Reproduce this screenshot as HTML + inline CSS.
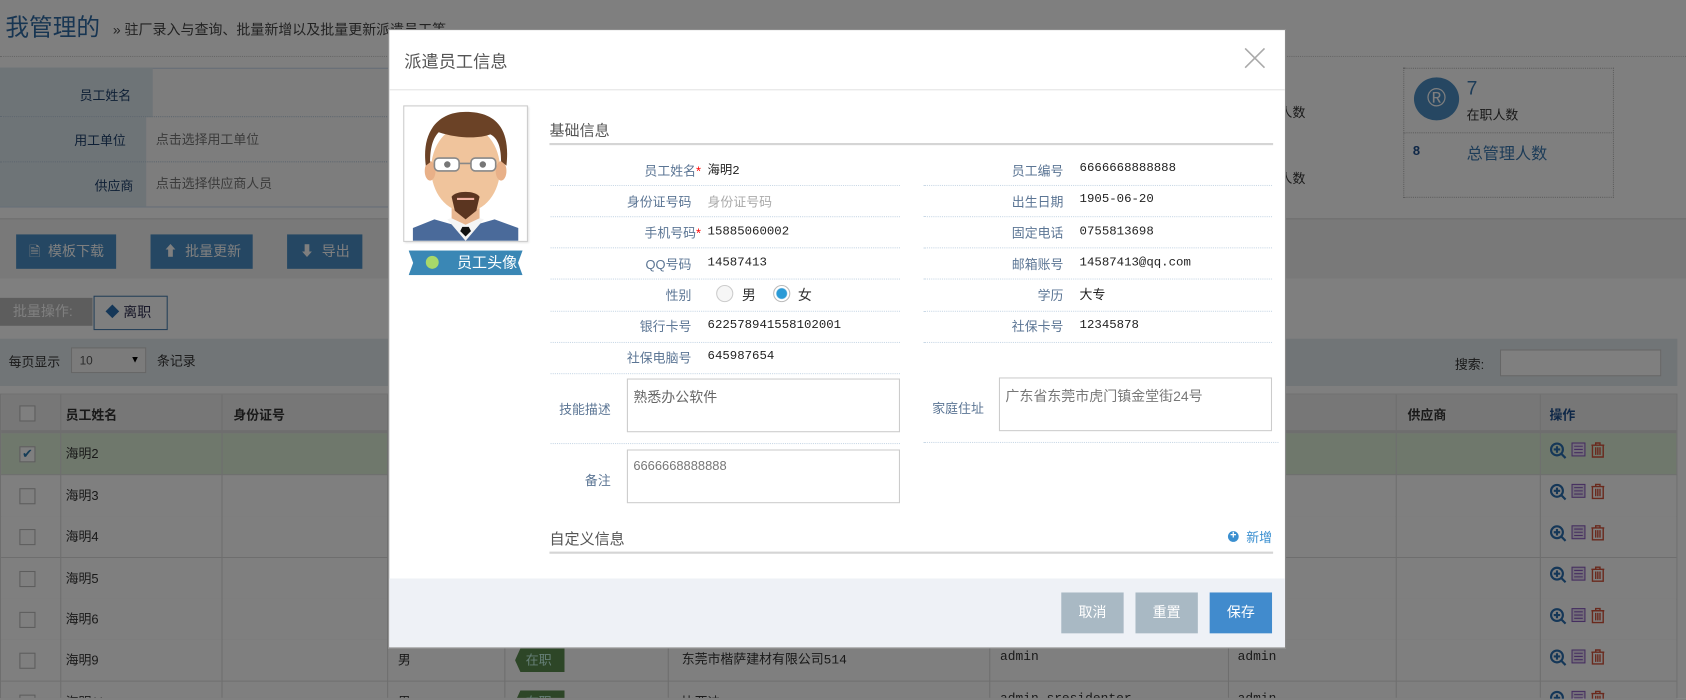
<!DOCTYPE html>
<html><head><meta charset="utf-8"><style>
*{margin:0;padding:0;box-sizing:border-box}
html,body{width:1686px;height:700px;overflow:hidden;background:#808080}
#w{position:absolute;left:0;top:0;width:1568px;height:650px;transform:scale(1.07526,1.07527);transform-origin:0 0;font-family:"Liberation Sans","Noto Sans CJK SC",sans-serif;font-size:12px;color:#333;overflow:hidden}
.a{position:absolute;white-space:nowrap}
.mono{font-family:"Liberation Mono","Noto Sans CJK SC",monospace}
.lab{position:absolute;text-align:right;color:#5b7594;font-size:12px;white-space:nowrap}
.val{position:absolute;font-family:"Liberation Mono","Noto Sans CJK SC",monospace;font-size:11.5px;color:#222;white-space:nowrap}
.dl{position:absolute;height:0;border-top:1px dotted #c9d8e6}
.btn{position:absolute;background:#4a8fc6;color:#fff;font-size:13px;line-height:32px;height:32px;white-space:nowrap}
.cell{position:absolute;border-right:1px solid #ddd;height:100%;top:0}
.row{position:absolute;left:0;width:1560px;height:39px;border-bottom:1px solid #ddd;background:#fff}
.row span{position:absolute;top:11px;white-space:nowrap}
.cb{position:absolute;left:17px;top:12px;width:15px;height:15px;border:1px solid #bbb;background:#fff}
.tag{position:absolute;background:#5b8c4e;color:#cfe;height:22px;width:46px;line-height:22px;padding-left:10px;clip-path:polygon(5px 0,100% 0,100% 100%,5px 100%,0 50%)}
</style></head><body><div id="w">
<div class="a" style="left:0;top:0;width:1568px;height:650px;background:#fff"></div>
<div class="a" style="left:5px;top:8px;font-size:22px;color:#2f6aa5">我管理的</div>
<div class="a" style="left:105px;top:17px;font-size:13px;color:#444">» 驻厂录入与查询、批量新增以及批量更新派遣员工等</div>
<div class="a" style="left:0;top:52px;width:1568px;border-top:1px dotted #ccc"></div>
<div class="a" style="left:0;top:63px;width:1190px;height:130px;background:#fafafa;border-top:1px solid #cde;border-bottom:1px solid #cde"></div>
<div class="a" style="left:0;top:63px;width:142px;height:46px;background:#dde8ef"></div>
<div class="a" style="left:0;top:109px;width:136px;height:83px;background:#dde8ef"></div>
<div class="a" style="left:0;top:108px;width:1190px;border-top:1px dotted #bcd"></div>
<div class="a" style="left:0;top:150px;width:1190px;border-top:1px dotted #bcd"></div>
<div class="a" style="left:74px;top:80px;color:#1d3f6b">员工姓名</div>
<div class="a" style="left:69px;top:122px;color:#1d3f6b">用工单位</div>
<div class="a" style="left:88px;top:164px;color:#1d3f6b">供应商</div>
<div class="a" style="left:145px;top:121px;color:#777">点击选择用工单位</div>
<div class="a" style="left:145px;top:162px;color:#777">点击选择供应商人员</div>
<div class="a" style="left:1305px;top:63px;width:196px;height:121px;border:1px dotted #bbb;background:#fff"></div>
<div class="a" style="left:1305px;top:123px;width:196px;border-top:1px dotted #bbb"></div>
<div class="a" style="left:1315px;top:72px;width:42px;height:40px;border-radius:50%;background:#4d8fc4;color:#fff;font-size:24px;text-align:center;line-height:40px">®</div>
<div class="a" style="left:1364px;top:72px;font-size:18px;color:#3b78b0">7</div>
<div class="a" style="left:1364px;top:98px;color:#333">在职人数</div>
<div class="a" style="left:1314px;top:133px;font-weight:bold;color:#1d4f8f">8</div>
<div class="a" style="left:1364px;top:132px;font-size:15px;color:#3b78b0">总管理人数</div>
<div class="a" style="left:1190px;top:96px">人数</div><div class="a" style="left:1190px;top:157px">人数</div>
<div class="a" style="left:0;top:203px;width:1568px;height:56px;background:#f3f3f3;border-top:1px solid #ddd"></div>
<div class="btn" style="left:15px;top:218px;width:93px;padding-left:12px">🗎&nbsp; 模板下载</div>
<div class="btn" style="left:140px;top:218px;width:95px;padding-left:12px">⬆&nbsp; 批量更新</div>
<div class="btn" style="left:267px;top:218px;width:70px;padding-left:12px">⬇&nbsp; 导出</div>
<div class="a" style="left:0;top:277px;width:86px;height:26px;background:#bbb;color:#fff;font-size:13px;line-height:26px;padding-left:12px">批量操作:</div>
<div class="a" style="left:87px;top:275px;width:69px;height:32px;border:1px solid #4a7fb0;background:#fff;color:#335;font-size:13px;line-height:30px;padding-left:10px"><span style="color:#2a6eb0">◆</span> 离职</div>
<div class="a" style="left:0;top:315px;width:1560px;height:44px;background:#e3ebef"></div>
<div class="a" style="left:8px;top:328px">每页显示</div>
<div class="a" style="left:66px;top:323px;width:70px;height:24px;border:1px solid #ccc;background:#f6f6f6;font-size:11px;padding:6px 0 0 7px;color:#555">10<span style="position:absolute;right:5px;top:5px;color:#000;font-size:9px">▼</span></div>
<div class="a" style="left:146px;top:327px">条记录</div>
<div class="a" style="left:1353px;top:330px">搜索:</div>
<div class="a" style="left:1395px;top:325px;width:150px;height:25px;border:1px solid #ccc;background:#fff"></div>
<div class="a" style="left:0;top:366px;width:1560px;height:284px;border:1px solid #ddd;overflow:hidden">
<div class="row" style="top:0;height:36px;background:#eee;border-bottom:3px solid #ddd;font-weight:bold">
<div class="cb" style="top:10px"></div><span style="left:60px;top:10px">员工姓名</span><span style="left:216px;top:10px">身份证号</span><span style="left:1308px;top:10px">供应商</span><span style="left:1440px;top:10px;color:#1d4f8f">操作</span></div>
<div class="row" style="top:36px;background:#dff0d8"><div class="cb" style="color:#2a7bb0;font-size:12px;line-height:13px;text-align:center">✔</div><span style="left:60px;top:10px">海明2</span></div>
<div class="row" style="top:75px"><div class="cb"></div><span style="left:60px;top:10px">海明3</span></div>
<div class="row" style="top:113px"><div class="cb"></div><span style="left:60px;top:10px">海明4</span></div>
<div class="row" style="top:152px"><div class="cb"></div><span style="left:60px;top:10px">海明5</span></div>
<div class="row" style="top:190px"><div class="cb"></div><span style="left:60px;top:10px">海明6</span></div>
<div class="row" style="top:228px"><div class="cb"></div><span style="left:60px;top:10px">海明9</span><span style="left:369px;top:10px">男</span><div class="tag" style="left:478px;top:8px">在职</div><span style="left:633px;top:9px" class="mono">东莞市楷萨建材有限公司514</span><span style="left:929px;top:9px" class="mono">admin</span><span style="left:1150px;top:9px" class="mono">admin</span></div>
<div class="row" style="top:267px"><div class="cb"></div><span style="left:60px;top:10px">海明11</span><span style="left:369px;top:10px">男</span><div class="tag" style="left:478px;top:8px">在职</div><span style="left:633px;top:10px">比亚迪</span><span style="left:929px;top:9px" class="mono">admin_sresidenter</span><span style="left:1150px;top:9px" class="mono">admin</span></div>
<div class="cell" style="left:55px"></div><div class="cell" style="left:205px"></div><div class="cell" style="left:359px"></div><div class="cell" style="left:468px"></div><div class="cell" style="left:620px"></div><div class="cell" style="left:919px"></div><div class="cell" style="left:1141px"></div><div class="cell" style="left:1297px"></div><div class="cell" style="left:1431px"></div>
</div>
<div class="a" style="left:1441px;top:411px;line-height:0;height:239px;overflow:hidden">
<svg width="52" height="250" viewBox="0 0 52 250">
<g id="ic"><circle cx="7" cy="7" r="5.5" fill="none" stroke="#2a6eb0" stroke-width="2"/><path d="M11 11l4 4M4 7h6M7 4v6" stroke="#2a6eb0" stroke-width="2"/><rect x="21" y="1" width="12" height="12" fill="#e6dcf2" stroke="#8a5cc0"/><path d="M23 4h8M23 7h8M23 10h8" stroke="#8a5cc0"/><path d="M39 3h12M43 3v-2h4v2M40 3v11h10v-11M43 5v7M45 5v7M47 5v7" fill="none" stroke="#d4533b" stroke-width="1.3"/></g>
<use href="#ic" y="38.5"/><use href="#ic" y="77"/><use href="#ic" y="115.5"/><use href="#ic" y="154"/><use href="#ic" y="192.5"/><use href="#ic" y="231"/>
</svg></div>
<div class="a" style="left:0;top:0;width:1568px;height:650px;background:rgba(0,0,0,0.5)"></div>
<div class="a" style="left:361px;top:27px;width:835px;height:576px;background:#fff;border:1px solid #888">
<div class="a" style="left:14px;top:16px;font-size:16px;color:#555">派遣员工信息</div>
<svg class="a" style="left:795px;top:16px" width="20" height="20"><path d="M1 1L19 19M19 1L1 19" stroke="#aaa" stroke-width="1.5"/></svg>
<div class="a" style="left:0;top:55px;width:833px;border-top:1px solid #e3e3e3"></div>
<div class="a" style="left:13px;top:70px;width:116px;height:127px;border:1px solid #ccc;box-shadow:1px 1px 2px #ddd;overflow:hidden">
<svg width="114" height="125" viewBox="0 0 114 125">
<path d="M8 125v-12l20-8 28 8 28-8 22 8v12z" fill="#4a6a9a"/><path d="M40 105l17 20 17-20-10-3h-14z" fill="#f5f5f5"/><path d="M54 112h6l2 4-5 5-5-5z" fill="#111"/>
<path d="M44 88v16l13 6 13-6v-16z" fill="#e8b690"/>
<ellipse cx="57" cy="58" rx="32" ry="40" fill="#f0c49c"/><ellipse cx="24" cy="60" rx="5" ry="9" fill="#e8b088"/><ellipse cx="90" cy="60" rx="5" ry="9" fill="#e8b088"/>
<path d="M20 55c-4-30 10-50 37-50s42 14 38 50l-5-4c0-15-4-22-10-25-10 4-30 4-48-2-6 6-8 16-8 28z" fill="#6b4226"/>
<rect x="28" y="48" width="23" height="12" rx="4" fill="#fff" stroke="#888" stroke-width="1.5"/><rect x="62" y="48" width="23" height="12" rx="4" fill="#fff" stroke="#888" stroke-width="1.5"/><path d="M51 53h11" stroke="#888" stroke-width="1.5"/>
<circle cx="40" cy="54" r="3" fill="#777"/><circle cx="73" cy="54" r="3" fill="#777"/>
<path d="M44 84c4-6 22-6 26 0l-3 13-10 8-10-8z" fill="#5b3520"/><path d="M49 86h16" stroke="#f0b0a0" stroke-width="2"/>
</svg></div>
<div class="a" style="left:18px;top:205px;width:106px;height:23px;background:#3a87b5;clip-path:polygon(0 0,100% 0,96% 50%,100% 100%,0 100%,4% 50%);color:#fff;font-size:14px;line-height:23px;padding-left:45px">员工头像</div>
<div class="a" style="left:34px;top:210px;width:12px;height:12px;border-radius:50%;background:#a8d86a"></div>
<div class="a" style="left:149px;top:83px;font-size:14px;color:#555">基础信息</div>
<div class="a" style="left:149px;top:105px;width:673px;border-top:2px solid #d5d5d5"></div>
<div class="lab" style="left:190px;width:100px;top:122px">员工姓名<span style="color:red">*</span></div><div class="val" style="left:296px;top:122px">海明2</div>
<div class="lab" style="left:180px;width:101px;top:151px">身份证号码</div><div class="val" style="left:296px;top:151px;color:#aaa;font-family:'Liberation Sans','Noto Sans CJK SC',sans-serif;font-size:12px">身份证号码</div>
<div class="lab" style="left:180px;width:110px;top:180px">手机号码<span style="color:red">*</span></div><div class="val" style="left:296px;top:181px">15885060002</div>
<div class="lab" style="left:180px;width:101px;top:209px">QQ号码</div><div class="val" style="left:296px;top:210px">14587413</div>
<div class="lab" style="left:180px;width:101px;top:238px">性别</div>
<div class="a" style="left:304px;top:237px;width:16px;height:16px;border-radius:50%;border:1px solid #ccc;background:#f6f6f6"></div><div class="a" style="left:328px;top:236px;font-size:13px">男</div>
<div class="a" style="left:357px;top:237px;width:16px;height:16px;border-radius:50%;border:1px solid #bbb;background:radial-gradient(#2a9ad6 4.5px,#fff 5.5px)"></div><div class="a" style="left:380px;top:236px;font-size:13px">女</div>
<div class="lab" style="left:180px;width:101px;top:267px">银行卡号</div><div class="val" style="left:296px;top:268px">622578941558102001</div>
<div class="lab" style="left:180px;width:101px;top:296px">社保电脑号</div><div class="val" style="left:296px;top:297px">645987654</div>
<div class="dl" style="left:150px;width:325px;top:144px"></div><div class="dl" style="left:150px;width:325px;top:173px"></div><div class="dl" style="left:150px;width:325px;top:202px"></div><div class="dl" style="left:150px;width:325px;top:231px"></div><div class="dl" style="left:150px;width:325px;top:261px"></div><div class="dl" style="left:150px;width:325px;top:290px"></div><div class="dl" style="left:150px;width:325px;top:319px"></div>
<div class="lab" style="left:530px;width:97px;top:122px">员工编号</div><div class="val" style="left:642px;top:122px">6666668888888</div>
<div class="lab" style="left:530px;width:97px;top:151px">出生日期</div><div class="val" style="left:642px;top:151px">1905-06-20</div>
<div class="lab" style="left:530px;width:97px;top:180px">固定电话</div><div class="val" style="left:642px;top:181px">0755813698</div>
<div class="lab" style="left:530px;width:97px;top:209px">邮箱账号</div><div class="val" style="left:642px;top:210px">14587413@qq.com</div>
<div class="lab" style="left:530px;width:97px;top:238px">学历</div><div class="val" style="left:642px;top:237px;font-family:'Liberation Sans','Noto Sans CJK SC',sans-serif;font-size:12px">大专</div>
<div class="lab" style="left:530px;width:97px;top:267px">社保卡号</div><div class="val" style="left:642px;top:268px">12345878</div>
<div class="dl" style="left:497px;width:324px;top:144px"></div><div class="dl" style="left:497px;width:324px;top:173px"></div><div class="dl" style="left:497px;width:324px;top:202px"></div><div class="dl" style="left:497px;width:324px;top:231px"></div><div class="dl" style="left:497px;width:324px;top:261px"></div><div class="dl" style="left:497px;width:324px;top:290px"></div>
<div class="lab" style="left:140px;width:66px;top:344px">技能描述</div>
<div class="a" style="left:221px;top:324px;width:254px;height:50px;border:1px solid #ccc;padding:6px 5px;color:#666;font-size:13px">熟悉办公软件</div>
<div class="dl" style="left:150px;width:325px;top:384px"></div>
<div class="lab" style="left:140px;width:66px;top:410px">备注</div>
<div class="a" style="left:221px;top:390px;width:254px;height:50px;border:1px solid #ccc;padding:7px 5px;color:#777;font-size:12px">6666668888888</div>
<div class="lab" style="left:470px;width:83px;top:343px">家庭住址</div>
<div class="a" style="left:567px;top:323px;width:254px;height:50px;border:1px solid #ccc;padding:6px 5px;color:#777;font-size:13px">广东省东莞市虎门镇金堂街24号</div>
<div class="dl" style="left:497px;width:330px;top:383px"></div>
<div class="a" style="left:149px;top:463px;font-size:14px;color:#555">自定义信息</div>
<div class="a" style="left:780px;top:466px;width:10px;height:10px;border-radius:50%;background:#3a8fd0;color:#fff;font-size:10px;line-height:10px;text-align:center;font-weight:bold">+</div>
<div class="a" style="left:797px;top:463px;color:#3a8fd0">新增</div>
<div class="a" style="left:149px;top:485px;width:673px;border-top:2px solid #d5d5d5"></div>
<div class="a" style="left:0;top:510px;width:833px;height:64px;background:#eef1f6"></div>
<div class="a" style="left:625px;top:523px;width:58px;height:38px;background:#a9b9c4;color:#fff;font-size:13px;line-height:38px;text-align:center">取消</div>
<div class="a" style="left:694px;top:523px;width:58px;height:38px;background:#a9b9c4;color:#fff;font-size:13px;line-height:38px;text-align:center">重置</div>
<div class="a" style="left:763px;top:523px;width:58px;height:38px;background:#418bcd;color:#fff;font-size:13px;line-height:38px;text-align:center">保存</div>
</div>
</div></body></html>
